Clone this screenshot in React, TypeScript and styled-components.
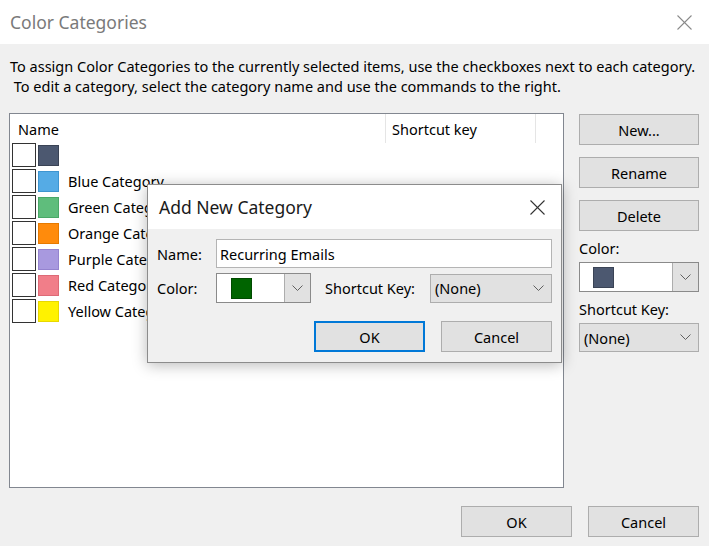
import React from "react";
import styled, { createGlobalStyle } from "styled-components";

const GlobalStyle = createGlobalStyle`
  html, body { margin: 0; padding: 0; }
  body {
    font-family: "Noto Sans", "Open Sans", sans-serif;
    background: #f0f0f0;
    color: #000;
  }
  * { box-sizing: border-box; }
`;

const FONT = `"Noto Sans", "Open Sans", sans-serif`;

const Window = styled.div`
  position: relative;
  width: 709px;
  height: 546px;
  background: #f0f0f0;
  display: flex;
  flex-direction: column;
  overflow: hidden;
  font-family: ${FONT};
  font-size: 14.5px;
`;

const TitleBar = styled.div<{ $h: number; $pl: number; $pr: number }>`
  height: ${(p) => p.$h}px;
  flex: none;
  background: #fff;
  display: flex;
  align-items: center;
  justify-content: space-between;
  padding: 0 ${(p) => p.$pr}px 0 ${(p) => p.$pl}px;
`;

const Title = styled.div<{ $color: string }>`
  font-size: 17.5px;
  color: ${(p) => p.$color};
  line-height: 24px;
`;

const Body = styled.div`
  flex: 1;
  display: flex;
  flex-direction: column;
  padding: 0 10px 0 9px;
`;

const Instructions = styled.div`
  margin-top: 12px;
  padding-left: 1px;
  line-height: 20px;
  white-space: pre;
`;

const MainRow = styled.div`
  margin-top: 17px;
  display: flex;
  gap: 15px;
`;

const ListBox = styled.div`
  width: 555px;
  height: 375px;
  border: 1px solid #828790;
  background: #fff;
  display: flex;
  flex-direction: column;
`;

const ListHeader = styled.div`
  height: 29px;
  display: flex;
  flex: none;
`;

const HeaderCell = styled.div<{ $w: number; $pl: number }>`
  width: ${(p) => p.$w}px;
  padding-left: ${(p) => p.$pl}px;
  border-right: 1px solid #e5e5e5;
  display: flex;
  align-items: center;
  line-height: 20px;
`;

const Rows = styled.div`
  display: flex;
  flex-direction: column;
  gap: 2px;
  padding-left: 2px;
`;

const Row = styled.div`
  height: 24px;
  display: flex;
  align-items: center;
`;

const Check = styled.div`
  width: 24px;
  height: 24px;
  border: 1px solid #333;
  background: #fff;
  flex: none;
`;

const Swatch = styled.div<{ $c: string; $b: string; $ml: number }>`
  width: 21px;
  height: 21px;
  margin-left: ${(p) => p.$ml}px;
  background: ${(p) => p.$c};
  border: 1px solid ${(p) => p.$b};
  flex: none;
`;

const RowLabel = styled.div`
  margin-left: 9px;
  line-height: 20px;
  white-space: nowrap;
`;

const Side = styled.div`
  width: 120px;
  padding-top: 1px;
  display: flex;
  flex-direction: column;
`;

const Button = styled.div<{ $w?: number; $focus?: boolean }>`
  width: ${(p) => (p.$w ? `${p.$w}px` : "100%")};
  height: 31px;
  background: #e1e1e1;
  border: ${(p) => (p.$focus ? "2px solid #0078d7" : "1px solid #adadad")};
  display: flex;
  align-items: center;
  justify-content: center;
  line-height: 20px;
  flex: none;
`;

const SideButtons = styled.div`
  display: flex;
  flex-direction: column;
  gap: 12px;
`;

const SideLabel = styled.div`
  margin: 7px 0 4px;
  line-height: 20px;
  height: 20px;
`;

const ColorCombo = styled.div<{ $w: number }>`
  width: ${(p) => p.$w}px;
  height: 30px;
  border: 1px solid #8a8a8a;
  background: #fff;
  display: flex;
  align-items: center;
  flex: none;
`;

const ComboSwatchArea = styled.div<{ $pl: number }>`
  flex: 1;
  padding-left: ${(p) => p.$pl}px;
  display: flex;
  align-items: center;
`;

const ComboArrow = styled.div`
  width: 26px;
  height: 100%;
  background: #e1e1e1;
  border-left: 1px solid #adadad;
  display: flex;
  align-items: center;
  justify-content: center;
`;

const Select = styled.div<{ $w: number }>`
  width: ${(p) => p.$w}px;
  height: 29px;
  background: #e1e1e1;
  border: 1px solid #adadad;
  display: flex;
  align-items: center;
  justify-content: space-between;
  padding: 0 7px 0 4px;
  line-height: 20px;
  flex: none;
`;

const Footer = styled.div`
  margin-top: 18px;
  display: flex;
  justify-content: flex-end;
  gap: 16px;
`;

/* Modal */
const Modal = styled.div`
  position: absolute;
  left: 147px;
  top: 184px;
  width: 415px;
  border: 1px solid #8c8c8c;
  background: #f0f0f0;
  box-shadow: 0 2px 14px rgba(0, 0, 0, 0.28);
  display: flex;
  flex-direction: column;
`;

const ModalBody = styled.div`
  padding: 10px 9px 10px 9px;
  display: flex;
  flex-direction: column;
`;

const FieldRow = styled.div<{ $mt: number }>`
  display: flex;
  align-items: center;
  margin-top: ${(p) => p.$mt}px;
`;

const FieldLabel = styled.div<{ $w?: number }>`
  width: ${(p) => (p.$w ? `${p.$w}px` : "auto")};
  line-height: 20px;
  flex: none;
`;

const TextInput = styled.div`
  width: 336px;
  height: 29px;
  border: 1px solid #b4b4b4;
  background: #fff;
  display: flex;
  align-items: center;
  padding-left: 3px;
  line-height: 20px;
`;

const ModalButtons = styled.div`
  margin-top: 18px;
  display: flex;
  justify-content: flex-end;
  gap: 16px;
  padding-right: 0px;
`;

const Spacer = styled.div<{ $w: number }>`
  width: ${(p) => p.$w}px;
  flex: none;
`;

const Chevron = () => (
  <svg width="11" height="7" viewBox="0 0 11 7">
    <polyline points="0.5,0.5 5.5,5.5 10.5,0.5" fill="none" stroke="#606060" strokeWidth="1" />
  </svg>
);

const CloseIcon = ({ color }: { color: string }) => (
  <svg width="15" height="15" viewBox="0 0 15 15">
    <line x1="0.5" y1="0.5" x2="14.5" y2="14.5" stroke={color} strokeWidth="1.1" />
    <line x1="14.5" y1="0.5" x2="0.5" y2="14.5" stroke={color} strokeWidth="1.1" />
  </svg>
);

const categories = [
  { name: "", c: "#4c5870", b: "#3a4355" },
  { name: "Blue Category", c: "#55abe5", b: "#3e95d0" },
  { name: "Green Category", c: "#5fbd7c", b: "#4aa867" },
  { name: "Orange Category", c: "#ff8b0c", b: "#e67a00" },
  { name: "Purple Category", c: "#a899df", b: "#9483cf" },
  { name: "Red Category", c: "#f17e89", b: "#dd6a76" },
  { name: "Yellow Category", c: "#fff200", b: "#e8d800" },
];

export default function App() {
  return (
    <>
      <GlobalStyle />
      <Window>
        <TitleBar $h={44} $pl={10} $pr={17}>
          <Title $color="#7a7a7a">Color Categories</Title>
          <CloseIcon color="#8a8a8a" />
        </TitleBar>
        <Body>
          <Instructions>
            {"To assign Color Categories to the currently selected items, use the checkboxes next to each category.\n To edit a category, select the category name and use the commands to the right."}
          </Instructions>
          <MainRow>
            <ListBox>
              <ListHeader>
                <HeaderCell $w={376} $pl={8}>Name</HeaderCell>
                <HeaderCell $w={150} $pl={6}>Shortcut key</HeaderCell>
              </ListHeader>
              <Rows>
                {categories.map((cat, i) => (
                  <Row key={i}>
                    <Check />
                    <Swatch $c={cat.c} $b={cat.b} $ml={2} />
                    <RowLabel>{cat.name}</RowLabel>
                  </Row>
                ))}
              </Rows>
            </ListBox>
            <Side>
              <SideButtons>
                <Button>New...</Button>
                <Button>Rename</Button>
                <Button>Delete</Button>
              </SideButtons>
              <SideLabel>Color:</SideLabel>
              <ColorCombo $w={120}>
                <ComboSwatchArea $pl={13}>
                  <Swatch $c="#4c5870" $b="#3a4355" $ml={0} />
                </ComboSwatchArea>
                <ComboArrow>
                  <Chevron />
                </ComboArrow>
              </ColorCombo>
              <SideLabel>Shortcut Key:</SideLabel>
              <Select $w={120}>
                <span>(None)</span>
                <Chevron />
              </Select>
            </Side>
          </MainRow>
          <Footer>
            <Button $w={111}>OK</Button>
            <Button $w={111}>Cancel</Button>
          </Footer>
        </Body>

        <Modal>
          <TitleBar $h={44} $pl={11} $pr={16}>
            <Title $color="#1a1a1a">Add New Category</Title>
            <CloseIcon color="#333" />
          </TitleBar>
          <ModalBody>
            <FieldRow $mt={0}>
              <FieldLabel $w={59}>Name:</FieldLabel>
              <TextInput>Recurring Emails</TextInput>
            </FieldRow>
            <FieldRow $mt={5}>
              <FieldLabel $w={59}>Color:</FieldLabel>
              <ColorCombo $w={95}>
                <ComboSwatchArea $pl={14}>
                  <Swatch $c="#006400" $b="#004a00" $ml={0} />
                </ComboSwatchArea>
                <ComboArrow>
                  <Chevron />
                </ComboArrow>
              </ColorCombo>
              <Spacer $w={14} />
              <FieldLabel $w={105}>Shortcut Key:</FieldLabel>
              <Select $w={122}>
                <span>(None)</span>
                <Chevron />
              </Select>
            </FieldRow>
            <ModalButtons>
              <Button $w={111} $focus>OK</Button>
              <Button $w={111}>Cancel</Button>
            </ModalButtons>
          </ModalBody>
        </Modal>
      </Window>
    </>
  );
}
